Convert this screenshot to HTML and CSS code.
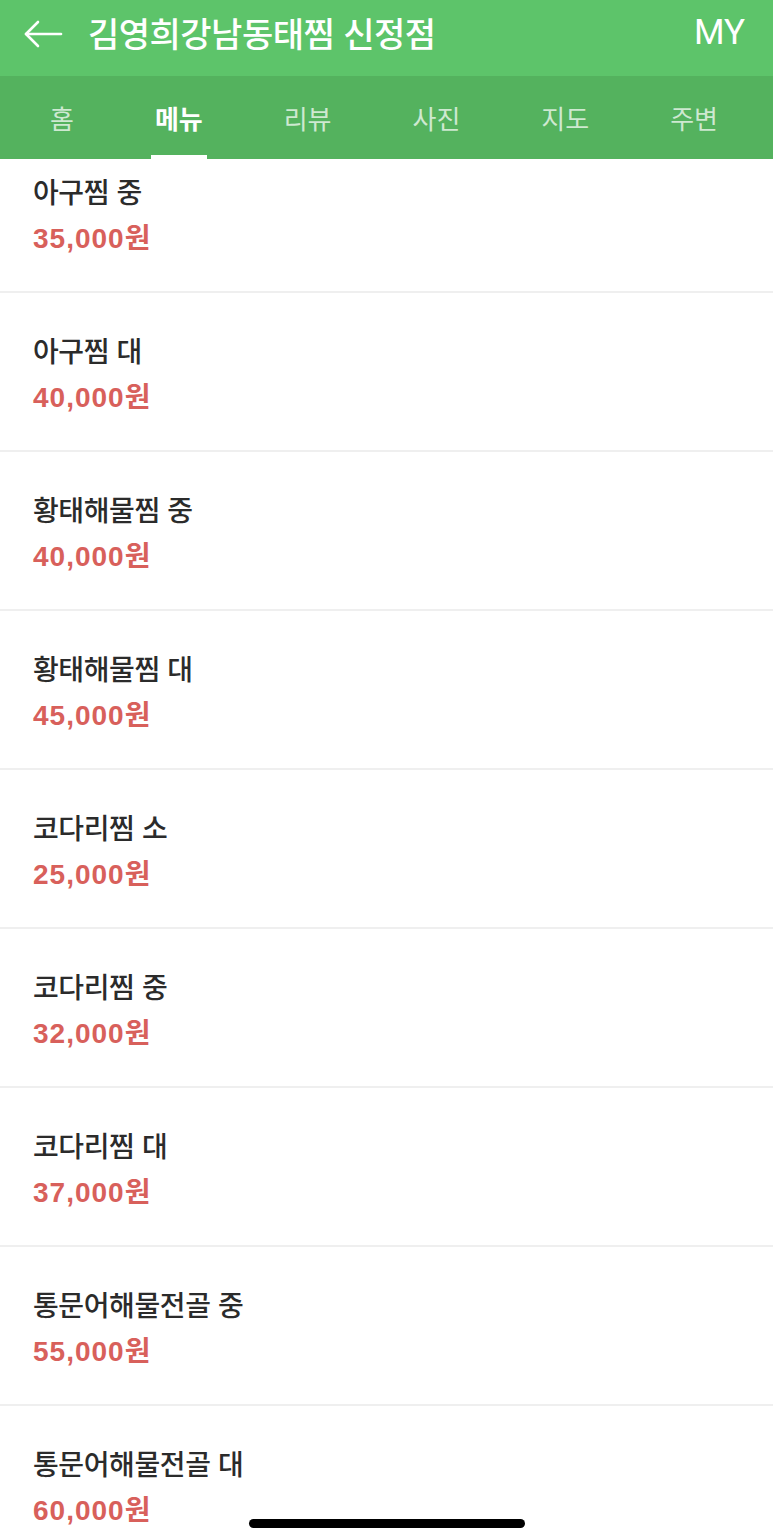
FILE: index.html
```html
<!DOCTYPE html>
<html lang="ko">
<head>
<meta charset="utf-8">
<title>김영희강남동태찜 신정점</title>
<link rel="stylesheet" href="styles.css">
</head>
<body>
<div class="app">
  <header class="topbar">
    <div class="back">
      <svg width="40" height="30" viewBox="0 0 40 30" fill="none" stroke="#fff" stroke-width="2.6" stroke-linecap="round" stroke-linejoin="round">
        <path d="M38 15H3"/>
        <path d="M15 3L3 15L15 27"/>
      </svg>
    </div>
    <h1 class="title">김영희강남동태찜 신정점</h1>
    <div class="my">MY</div>
  </header>
  <nav class="tabs">
    <span class="tab">홈</span>
    <span class="tab active">메뉴</span>
    <span class="tab">리뷰</span>
    <span class="tab">사진</span>
    <span class="tab">지도</span>
    <span class="tab">주변</span>
  </nav>
  <main class="list">
    <div class="item cut"><div class="name">아구찜 중</div><div class="price">35,000원</div></div>
    <div class="item"><div class="name">아구찜 대</div><div class="price">40,000원</div></div>
    <div class="item"><div class="name">황태해물찜 중</div><div class="price">40,000원</div></div>
    <div class="item"><div class="name">황태해물찜 대</div><div class="price">45,000원</div></div>
    <div class="item"><div class="name">코다리찜 소</div><div class="price">25,000원</div></div>
    <div class="item"><div class="name">코다리찜 중</div><div class="price">32,000원</div></div>
    <div class="item"><div class="name">코다리찜 대</div><div class="price">37,000원</div></div>
    <div class="item"><div class="name">통문어해물전골 중</div><div class="price">55,000원</div></div>
    <div class="item last"><div class="name">통문어해물전골 대</div><div class="price">60,000원</div></div>
  </main>
  <div class="home-indicator"></div>
</div>
</body>
</html>
```

FILE: styles.css
```css
* { box-sizing: border-box; }
html, body {
  margin: 0;
  padding: 0;
  background: #fff;
}
body {
  font-family: "Noto Sans CJK KR", "Noto Sans", sans-serif;
  width: 773px;
  height: 1539px;
  overflow: hidden;
}
.app {
  position: relative;
  width: 773px;
  height: 1539px;
  overflow: hidden;
}
.topbar {
  height: 76px;
  background: #5dc46a;
  display: flex;
  align-items: center;
  padding: 0 28px 0 23px;
  color: #fff;
}
.back {
  width: 40px;
  height: 30px;
  display: flex;
  margin-top: -8px;
}
.title {
  margin: -10px 0 0 25px;
  font-size: 34px;
  line-height: 44px;
  font-weight: 500;
  letter-spacing: -0.5px;
  flex: 1;
}
.my {
  font-family: "Roboto", "Noto Sans", sans-serif;
  font-size: 35px;
  line-height: 44px;
  font-weight: 400;
  margin-top: -10px;
}
.tabs {
  height: 83px;
  background: #54b25e;
  display: flex;
  justify-content: space-between;
  align-items: center;
  padding: 0 55px 0 50px;
}
.tab {
  position: relative;
  font-size: 26px;
  color: rgba(255,255,255,0.72);
  font-weight: 400;
  line-height: 34px;
}
.tab.active {
  color: #fff;
  font-weight: 700;
}
.tab.active::after {
  content: "";
  position: absolute;
  left: -4px;
  right: -4px;
  top: 54px;
  height: 4px;
  background: #fff;
}
.list {
  display: flex;
  flex-direction: column;
}
.item {
  height: 159px;
  padding: 40px 33px 0;
  border-bottom: 2px solid #efefef;
}
.item.cut {
  height: 134px;
  padding-top: 15px;
}
.item.last {
  border-bottom: none;
}
.name {
  font-size: 28px;
  line-height: 34px;
  font-weight: 500;
  color: #2b2b2b;
  letter-spacing: -0.4px;
}
.price {
  margin-top: 14px;
  font-family: "Liberation Sans", "Noto Sans CJK KR", sans-serif;
  font-size: 28px;
  line-height: 34px;
  font-weight: 700;
  letter-spacing: 1px;
  color: #d8605b;
}
.home-indicator {
  position: absolute;
  left: 249px;
  bottom: 11px;
  width: 276px;
  height: 9px;
  border-radius: 5px;
  background: #000;
}
```
